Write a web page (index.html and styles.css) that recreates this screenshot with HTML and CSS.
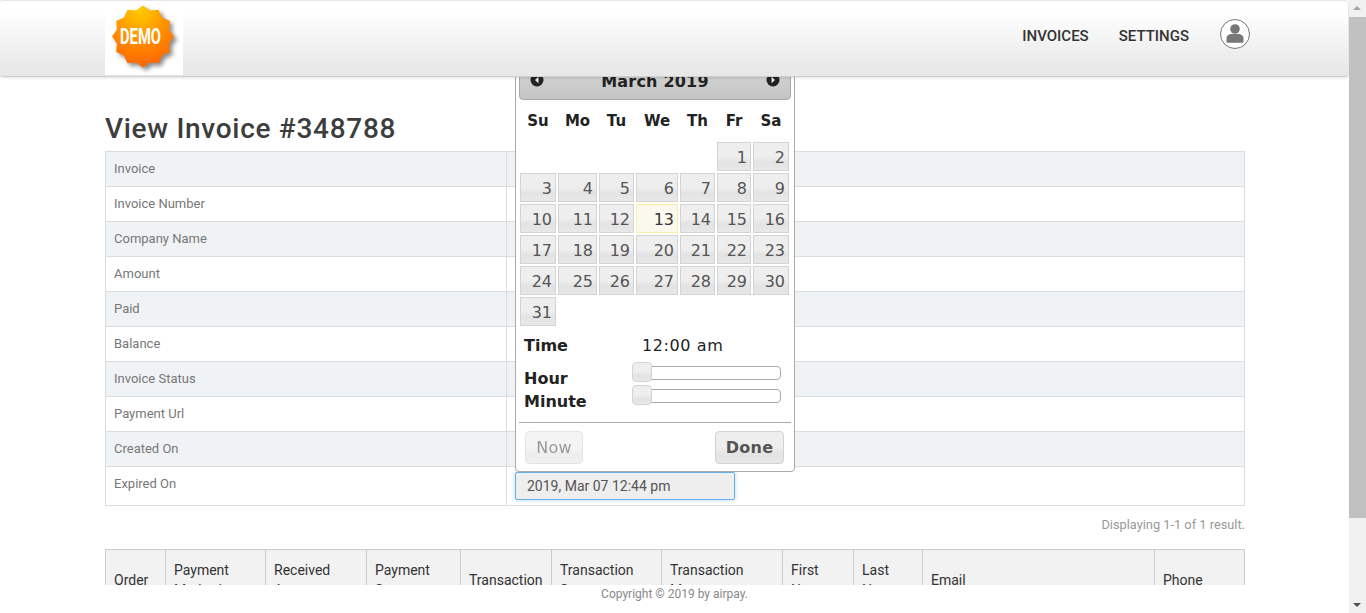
FILE: index.html
```html
<!DOCTYPE html>
<html lang="en">
<head>
    <meta charset="UTF-8">
    <meta name="viewport" content="width=device-width, initial-scale=1.0">
    <title>View Invoice #348788</title>
    <link rel="stylesheet" href="styles.css">
</head>
<body>

<div class="app">
    <div class="page">
        <header class="topbar">
            <div class="topbar-inner">
                <a class="logo" href="#">
                    <svg width="78" height="70" viewBox="0 0 78 70">
                        <defs>
                            <radialGradient id="badge" cx="0.45" cy="0.08" r="1">
                                <stop offset="0" stop-color="#ffcc00"/>
                                <stop offset="0.5" stop-color="#ff8c00"/>
                                <stop offset="1" stop-color="#ff5f00"/>
                            </radialGradient>
                        </defs>
                        <polygon class="badge" fill="url(#badge)" transform="translate(0 -3.5)" points="69,35 64.1,42 64.8,50.5 57.1,54.1 53.5,61.8 45,61.1 38,66 31,61.1 22.5,61.8 18.9,54.1 11.2,50.5 11.9,42 7,35 11.9,28 11.2,19.5 18.9,15.9 22.5,8.2 31,8.9 38,4 45,8.9 53.5,8.2 57.1,15.9 64.8,19.5 64.1,28"/>
                        <text class="badge-text" x="15" y="39" textLength="41" lengthAdjust="spacingAndGlyphs">DEMO</text>
                    </svg>
                </a>
                <nav class="mainnav">
                    <a href="#">INVOICES</a>
                    <a href="#">SETTINGS</a>
                    <a class="avatar" href="#">
                        <svg width="32" height="32" viewBox="0 0 32 32">
                            <circle cx="16" cy="16" r="14.5" fill="#fff" stroke="#777" stroke-width="1"/>
                            <circle cx="16" cy="11" r="4.8" fill="#777"/>
                            <path d="M7.5 23.5 V20.5 C7.5 17.5 10 16 12.5 16 H19.5 C22 16 24.5 17.5 24.5 20.5 V23.5 C24.5 24.3 24 24.8 23.2 24.8 H8.8 C8 24.8 7.5 24.3 7.5 23.5 Z" fill="#777"/>
                        </svg>
                    </a>
                </nav>
            </div>
        </header>

        <main class="content">
            <h1>View Invoice #348788</h1>

            <table class="detail">
                <tr><th>Invoice</th><td></td></tr>
                <tr><th>Invoice Number</th><td></td></tr>
                <tr><th>Company Name</th><td></td></tr>
                <tr><th>Amount</th><td></td></tr>
                <tr><th>Paid</th><td></td></tr>
                <tr><th>Balance</th><td></td></tr>
                <tr><th>Invoice Status</th><td></td></tr>
                <tr><th>Payment Url</th><td></td></tr>
                <tr><th>Created On</th><td></td></tr>
                <tr class="last-row">
                    <th>Expired On</th>
                    <td><input class="date-input" type="text" value="2019, Mar 07 12:44 pm"></td>
                </tr>
            </table>

            <p class="summary">Displaying 1-1 of 1 result.</p>

            <table class="orders">
                <colgroup>
                    <col class="c1"><col class="c2"><col class="c3"><col class="c4"><col class="c5"><col class="c6">
                    <col class="c7"><col class="c8"><col class="c9"><col class="c10"><col class="c11">
                </colgroup>
                <tr>
                    <th>Order</th>
                    <th>Payment Method</th>
                    <th>Received Amount</th>
                    <th>Payment Status</th>
                    <th>Transaction</th>
                    <th>Transaction Status</th>
                    <th>Transaction Message</th>
                    <th>First Name</th>
                    <th>Last Name</th>
                    <th>Email</th>
                    <th>Phone</th>
                </tr>
            </table>

            <div class="datepicker">
                <div class="dp-header">
                    <svg class="dp-arrow" width="14" height="14" viewBox="0 0 14 14">
                        <circle cx="7" cy="7" r="6.5" fill="#222"/>
                        <path d="M8.5 3.8 L5 7 L8.5 10.2 Z" fill="#eee"/>
                    </svg>
                    <span class="dp-title">March 2019</span>
                    <svg class="dp-arrow" width="14" height="14" viewBox="0 0 14 14">
                        <circle cx="7" cy="7" r="6.5" fill="#222"/>
                        <path d="M5.5 3.8 L9 7 L5.5 10.2 Z" fill="#eee"/>
                    </svg>
                </div>
                <div class="dp-days">
                    <b>Su</b><b>Mo</b><b>Tu</b><b>We</b><b>Th</b><b>Fr</b><b>Sa</b>
                </div>
                <div class="dp-grid">
                    <span class="blank"></span><span class="blank"></span><span class="blank"></span><span class="blank"></span><span class="blank"></span>
                    <a>1</a><a>2</a>
                    <a>3</a><a>4</a><a>5</a><a>6</a><a>7</a><a>8</a><a>9</a>
                    <a>10</a><a>11</a><a>12</a><a class="today">13</a><a>14</a><a>15</a><a>16</a>
                    <a>17</a><a>18</a><a>19</a><a>20</a><a>21</a><a>22</a><a>23</a>
                    <a>24</a><a>25</a><a>26</a><a>27</a><a>28</a><a>29</a><a>30</a>
                    <a>31</a>
                </div>
                <div class="dp-time">
                    <b>Time</b><span class="dp-clock">12:00 am</span>
                    <b class="dp-hour">Hour</b><div class="slider"><i></i></div>
                    <b class="dp-minute">Minute</b><div class="slider"><i></i></div>
                </div>
                <div class="dp-buttons">
                    <button class="btn-now">Now</button>
                    <button class="btn-done">Done</button>
                </div>
            </div>
        </main>

        <footer class="copyright">Copyright © 2019 by airpay.</footer>
    </div>

    <div class="scrollbar">
        <span class="sb-up"></span>
        <div class="sb-track"><div class="sb-thumb"></div></div>
        <span class="sb-down"></span>
    </div>
</div>

</body>
</html>
```

FILE: styles.css
```css
* {
    box-sizing: border-box;
}
html, body {
    margin: 0;
    padding: 0;
    height: 100%;
    overflow: hidden;
}
body {
    font-family: Roboto, "Liberation Sans", sans-serif;
    font-size: 14px;
    color: #333;
    background-color: #fff;
}
a {
    text-decoration: none;
}

.app {
    display: flex;
    height: 613px;
}
.page {
    width: 1349px;
    height: 613px;
    display: flex;
    flex-direction: column;
    overflow: hidden;
    position: relative;
}

/* top bar */
.topbar {
    flex: none;
    height: 77px;
    padding-left: 105px;
    padding-right: 97px;
    background: linear-gradient(#fff 15%, #e8e8e8 90%);
    border: 1px solid #e7e7e7;
    border-bottom: 1px solid #d0d0d0;
    border-radius: 4px;
    box-shadow: 0 1px 3px rgba(0, 0, 0, 0.12);
    position: relative;
    z-index: 10;
    margin-left: -1px;
    margin-right: 0;
}
.topbar-inner {
    display: flex;
    justify-content: space-between;
    align-items: flex-start;
}
.logo {
    display: block;
    width: 78px;
    height: 70px;
    margin-top: 4px;
    background-color: #fff;
}
.badge {
    filter: drop-shadow(3px 3px 2px rgba(0, 0, 0, 0.45));
}
.badge-text {
    font-family: Roboto, sans-serif;
    font-weight: 700;
    font-size: 22px;
    fill: #fff;
}
.mainnav {
    display: flex;
    align-items: center;
    gap: 30px;
    height: 70px;
}
.mainnav a {
    font-size: 15px;
    font-weight: 500;
    color: #333;
}
.mainnav .avatar {
    display: block;
    height: 32px;
    margin-top: -4px;
}

/* main column */
.content {
    flex: 1;
    min-height: 0;
    padding-left: 105px;
    width: 1246px;
    overflow: hidden;
}
h1 {
    margin: 35px 0 6px;
    font-size: 28px;
    line-height: 33px;
    font-weight: 500;
    letter-spacing: 0.7px;
    color: #3d3d3d;
}

.detail {
    width: 1140px;
    border-collapse: collapse;
    table-layout: fixed;
    font-size: 13px;
    color: #777;
}
.detail th {
    width: 401px;
    font-weight: 400;
    text-align: left;
    padding: 0 8px 2px;
    height: 35px;
    border: 1px solid #ddd;
}
.detail td {
    border: 1px solid #ddd;
    padding: 0 8px;
}
.detail tr:nth-child(odd) {
    background-color: #f0f3f6;
}
.detail .last-row {
    height: 39px;
    background-color: #fff;
}
.detail .last-row th {
    vertical-align: top;
    padding-top: 9px;
}
.date-input {
    display: block;
    width: 220px;
    height: 28px;
    margin-top: 0;
    padding: 0 11px;
    font-family: inherit;
    font-size: 14px;
    color: #555;
    background-color: #eee;
    border: 1px solid #66afe9;
    border-radius: 2px;
    box-shadow: 0 0 4px rgba(102, 175, 233, 0.5);
    outline: none;
}

.summary {
    margin: 11px 0 16px;
    font-size: 12.8px;
    line-height: 16px;
    color: #999;
    text-align: right;
    width: 1140px;
}

.orders {
    width: 1139px;
    border-collapse: collapse;
    table-layout: fixed;
}
.orders th {
    height: 60px;
    padding: 0 8px;
    font-size: 14px;
    line-height: 20px;
    font-weight: 400;
    text-align: left;
    color: #333;
    background-color: #f2f2f2;
    border: 1px solid #ccc;
}
.c1 { width: 60px; }
.c2 { width: 100px; }
.c3 { width: 101px; }
.c4 { width: 94px; }
.c5 { width: 91px; }
.c6 { width: 110px; }
.c7 { width: 121px; }
.c8 { width: 71px; }
.c9 { width: 69px; }
.c10 { width: 232px; }
.c11 { width: 90px; }

/* date picker popup, hangs over the table */
.datepicker {
    position: absolute;
    left: 515px;
    top: 60px;
    width: 280px;
    height: 412px;
    padding: 3px;
    font-family: "DejaVu Sans", Verdana, sans-serif;
    font-size: 16px;
    color: #222;
    background-color: #fff;
    border: 1px solid #aaa;
    border-radius: 4px;
    z-index: 5;
}
.dp-header {
    display: flex;
    justify-content: space-between;
    align-items: flex-start;
    height: 36px;
    padding: 9px 10px 0 10px;
    background: linear-gradient(#cfcfcf 40%, #c4c4c4 100%);
    border: 1px solid #aaa;
    border-radius: 0 0 4px 4px;
}
.dp-arrow {
    margin-top: -1px;
}
.dp-title {
    font-weight: 700;
    letter-spacing: 0.2px;
    line-height: 16px;
}
.dp-days,
.dp-grid {
    display: grid;
    grid-template-columns: 36px 39px 35px 42px 35px 34px 36px;
    column-gap: 2px;
    margin-left: 1px;
}
.dp-days {
    height: 42px;
    align-items: center;
    text-align: center;
    font-size: 15px;
    color: #222;
}
.dp-grid {
    row-gap: 2px;
    grid-auto-rows: 29px;
}
.dp-grid a {
    text-align: right;
    padding-right: 3px;
    line-height: 29px;
    color: #555;
    border: 1px solid #d3d3d3;
    background: linear-gradient(#eee 50%, #e3e3e3 70%, #e8e8e8);
}
.dp-grid .today {
    color: #363636;
    border-color: #fcefa1;
    background: #fbf9ee;
}
.dp-time {
    display: grid;
    grid-template-columns: 110px 148px;
    align-items: center;
    padding-left: 5px;
    margin-top: 4px;
    height: 93px;
    border-bottom: 1px solid #aaa;
    grid-template-rows: 30px 23px 23px;
    align-content: start;
}
.dp-clock {
    color: #222;
    letter-spacing: 0.6px;
    margin-left: 8px;
}
.dp-hour,
.dp-minute {
    position: relative;
    top: 7px;
    width: 100px;
}
.slider {
    position: relative;
    top: 1px;
    height: 14px;
    width: 148px;
    background-color: #fff;
    border: 1px solid #aaa;
    border-radius: 4px;
    margin-left: -1px;
}
.slider i {
    position: absolute;
    left: -2px;
    top: -5px;
    width: 20px;
    height: 20px;
    border: 1px solid #d3d3d3;
    border-radius: 4px;
    background: linear-gradient(#eee 50%, #e3e3e3 70%, #e8e8e8);
}
.dp-buttons {
    display: flex;
    justify-content: space-between;
    padding: 8px 7px 0 6px;
}
.dp-buttons button {
    height: 33px;
    font-family: inherit;
    font-size: 16px;
    letter-spacing: 0.3px;
    color: #555;
    border: 1px solid #d3d3d3;
    border-radius: 4px;
    background: linear-gradient(#eee 50%, #e3e3e3 70%, #e8e8e8);
    padding: 0;
}
.btn-now {
    width: 58px;
    opacity: 0.6;
}
.btn-done {
    width: 69px;
    font-weight: 700;
}

.copyright {
    flex: none;
    height: 28px;
    padding-top: 1px;
    font-size: 12px;
    line-height: 16px;
    text-align: center;
    color: #888;
    background-color: #fff;
    position: relative;
    z-index: 6;
}

/* scrollbar on the right */
.scrollbar {
    width: 17px;
    height: 613px;
    display: flex;
    flex-direction: column;
    background-color: #f1f1f1;
}
.sb-up,
.sb-down {
    flex: none;
    height: 17px;
    width: 17px;
    position: relative;
}
.sb-up::before,
.sb-down::before {
    content: "";
    position: absolute;
    left: 4px;
    border-left: 4px solid transparent;
    border-right: 4px solid transparent;
}
.sb-up::before {
    top: 6px;
    border-bottom: 4px solid #a3a3a3;
}
.sb-down::before {
    top: 7px;
    border-top: 4px solid #505050;
}
.sb-track {
    flex: 1;
}
.sb-thumb {
    height: 501px;
    background-color: #c1c1c1;
}
```
